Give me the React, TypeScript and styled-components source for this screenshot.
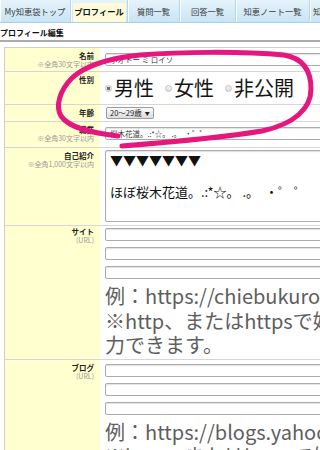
import React from 'react';
import styled, { createGlobalStyle } from 'styled-components';

const Global = createGlobalStyle`
  html, body { margin: 0; padding: 0; background: #fff; }
  body { font-family: "Noto Sans CJK JP", "Noto Sans", sans-serif; }
`;

const Page = styled.div`
  position: relative;
  width: 320px;
  height: 450px;
  overflow: hidden;
  background: #fff;
  color: #333;
  font-family: "Noto Sans CJK JP", "Noto Sans", sans-serif;
`;

const TabBar = styled.nav`
  display: flex;
  height: 22px;
  background: linear-gradient(#e6f3fb, #c8e4f5);
  border-bottom: 1px solid #a8cfe7;
  white-space: nowrap;
`;

const Tab = styled.div<{ $w?: number; $active?: boolean }>`
  flex: ${(p) => (p.$w ? `0 0 ${p.$w}px` : '1 0 auto')};
  display: flex;
  align-items: center;
  justify-content: ${(p) => (p.$w ? 'center' : 'flex-start')};
  padding-left: ${(p) => (p.$w ? 0 : 3)}px;
  box-sizing: border-box;
  font-size: 8.3px;
  font-weight: ${(p) => (p.$active ? 'bold' : 'normal')};
  color: ${(p) => (p.$active ? '#111' : '#3a3a3a')};
  border-right: 1px solid #b4d7ec;
  box-shadow: inset 1px 0 0 rgba(255, 255, 255, 0.85);
  background: ${(p) =>
    p.$active
      ? 'linear-gradient(#fbfbd9, #fbfbd9) 2px 3px / calc(100% - 3px) calc(100% - 3px) no-repeat'
      : 'transparent'};
`;

const Heading = styled.h1`
  margin: 0;
  padding: 3px 0 1px 0;
  font-size: 8px;
  line-height: 13px;
  font-weight: bold;
  color: #111;
  border-bottom: 2px solid #ababab;
`;

const Table = styled.div`
  margin: 5px 0 0 4px;
  width: 420px;
  border-top: 1px solid #cfcfcf;
  border-left: 1px solid #cfcfcf;
`;

const Row = styled.div`
  display: grid;
  grid-template-columns: 95px 1fr;
  border-bottom: 1px solid #d6d6d6;
`;

const Label = styled.div<{ $pt?: number }>`
  background: #ffffcf;
  text-align: right;
  padding: ${(p) => p.$pt ?? 3}px 6px 0 0;
  font-size: 7.5px;
  line-height: 9px;
`;

const LabelTitle = styled.div`
  font-weight: bold;
  color: #222;
`;

const LabelNote = styled.div`
  color: #9a9a9a;
  font-size: 7px;
`;

const Value = styled.div<{ $pad: string }>`
  padding: ${(p) => p.$pad};
  display: flex;
  flex-direction: column;
  align-items: flex-start;
`;

const Stack = styled.div`
  display: flex;
  flex-direction: column;
  gap: 6px;
`;

const TextInput = styled.input`
  box-sizing: border-box;
  width: 300px;
  height: 13px;
  margin: 0;
  padding: 0 4px;
  border: 1px solid #ababab;
  border-radius: 2px;
  box-shadow: inset 0 1px 1px rgba(0, 0, 0, 0.12);
  background: #fff;
  font-family: "Noto Sans CJK JP", "Noto Sans", sans-serif;
  font-size: 7.5px;
  line-height: 11px;
  color: #333;
  outline: none;
`;

const TextArea = styled.textarea`
  box-sizing: border-box;
  width: 300px;
  height: 72px;
  margin: 0;
  padding: 1px 4px;
  border: 1px solid #ababab;
  border-radius: 2px;
  box-shadow: inset 0 1px 1px rgba(0, 0, 0, 0.12);
  background: #fff;
  font-family: "Noto Sans CJK JP", "Noto Sans", sans-serif;
  font-size: 13px;
  line-height: 16px;
  color: #111;
  resize: none;
  overflow: hidden;
  outline: none;
  display: block;
`;

const RadioGroup = styled.div`
  display: flex;
  align-items: center;
  font-size: 20px;
  line-height: 24px;
  color: #151515;
`;

const RadioItem = styled.label`
  display: flex;
  align-items: center;
  gap: 2px;
  margin-right: 11px;
`;

const RadioDot = styled.span<{ $checked?: boolean }>`
  box-sizing: border-box;
  width: 7px;
  height: 7px;
  border-radius: 50%;
  border: 1px solid #c2c2c2;
  background: ${(p) =>
    p.$checked
      ? 'radial-gradient(circle, #6f6f6f 0 1.4px, #e8e8e8 1.9px)'
      : 'linear-gradient(#f4f4f4, #dedede)'};
`;

const Select = styled.div`
  display: inline-flex;
  align-items: center;
  gap: 3px;
  box-sizing: border-box;
  height: 12px;
  padding: 0 3px;
  border: 1px solid #9c9c9c;
  border-radius: 2px;
  background: linear-gradient(#fafafa, #dcdcdc);
  font-size: 7.5px;
  line-height: 10px;
  color: #222;
`;

const Caret = styled.span`
  font-size: 5px;
`;

const Hint = styled.p`
  margin: 5px 0 0;
  width: 372px;
  font-size: 20px;
  line-height: 24.5px;
  color: #5e5e5e;
`;

const Overlay = styled.svg`
  position: absolute;
  left: 0;
  top: 0;
  pointer-events: none;
`;

export default function App() {
  return (
    <Page>
      <Global />
      <TabBar>
        <Tab $w={71}>My知恵袋トップ</Tab>
        <Tab $w={57} $active>
          プロフィール
        </Tab>
        <Tab $w={52}>質問一覧</Tab>
        <Tab $w={56}>回答一覧</Tab>
        <Tab $w={74}>知恵ノート一覧</Tab>
        <Tab>知恵コレクション</Tab>
      </TabBar>
      <Heading>プロフィール編集</Heading>
      <Table>
        <Row>
          <Label>
            <LabelTitle>名前</LabelTitle>
            <LabelNote>※全角30文字以内</LabelNote>
          </Label>
          <Value $pad="5px 0 5px 5px">
            <TextInput readOnly defaultValue="ホオトー ミ ロイソ" />
          </Value>
        </Row>
        <Row>
          <Label>
            <LabelTitle>性別</LabelTitle>
          </Label>
          <Value $pad="4px 0 4px 5px">
            <RadioGroup>
              <RadioItem>
                <RadioDot $checked />
                男性
              </RadioItem>
              <RadioItem>
                <RadioDot />
                女性
              </RadioItem>
              <RadioItem>
                <RadioDot />
                非公開
              </RadioItem>
            </RadioGroup>
          </Value>
        </Row>
        <Row>
          <Label>
            <LabelTitle>年齢</LabelTitle>
          </Label>
          <Value $pad="2px 0 2px 6px">
            <Select>
              20～29歳<Caret>▼</Caret>
            </Select>
          </Value>
        </Row>
        <Row>
          <Label>
            <LabelTitle>職業</LabelTitle>
            <LabelNote>※全角30文字以内</LabelNote>
          </Label>
          <Value $pad="5px 0 7px 5px">
            <TextInput readOnly defaultValue="桜木花道。.:*☆。 .。  ・゜゜" />
          </Value>
        </Row>
        <Row>
          <Label>
            <LabelTitle>自己紹介</LabelTitle>
            <LabelNote>※全角1,000文字以内</LabelNote>
          </Label>
          <Value $pad="2px 0 3px 5px">
            <TextArea
              readOnly
              defaultValue={'▼▼▼▼▼▼▼\n\nほぼ桜木花道。.:*☆。 .。  ・゜ ゜\n\n'}
            />
          </Value>
        </Row>
        <Row>
          <Label $pt={1}>
            <LabelTitle>サイト</LabelTitle>
            <LabelNote>(URL)</LabelNote>
          </Label>
          <Value $pad="2px 0 1px 5px">
            <Stack>
              <TextInput readOnly defaultValue="" />
              <TextInput readOnly defaultValue="" />
              <TextInput readOnly defaultValue="" />
            </Stack>
            <Hint>
              例：https://chiebukuro.yahoo.co.jp/
              <br />
              ※http、またはhttpsで始まるURLのみ入力できます。
            </Hint>
          </Value>
        </Row>
        <Row>
          <Label>
            <LabelTitle>ブログ</LabelTitle>
            <LabelNote>(URL)</LabelNote>
          </Label>
          <Value $pad="4px 0 1px 5px">
            <Stack>
              <TextInput readOnly defaultValue="" />
              <TextInput readOnly defaultValue="" />
              <TextInput readOnly defaultValue="" />
            </Stack>
            <Hint>
              例：https://blogs.yahoo.co.jp/
              <br />
              ※http、またはhttpsで始まるURLのみ入力できます。
            </Hint>
          </Value>
        </Row>
      </Table>
      <Overlay width="320" height="450" viewBox="0 0 320 450">
        <path
          d="M 122,146 C 160,143 220,138 262,131 C 295,124 311,108 311,89 C 311,70 302,58 284,55 C 240,51 180,52 140,55 C 110,58 85,66 72,78 C 60,90 55,106 61,116 C 69,128 92,133 118,136"
          fill="none"
          stroke="#e5167d"
          strokeWidth="5"
          strokeLinecap="round"
          strokeLinejoin="round"
        />
      </Overlay>
    </Page>
  );
}
